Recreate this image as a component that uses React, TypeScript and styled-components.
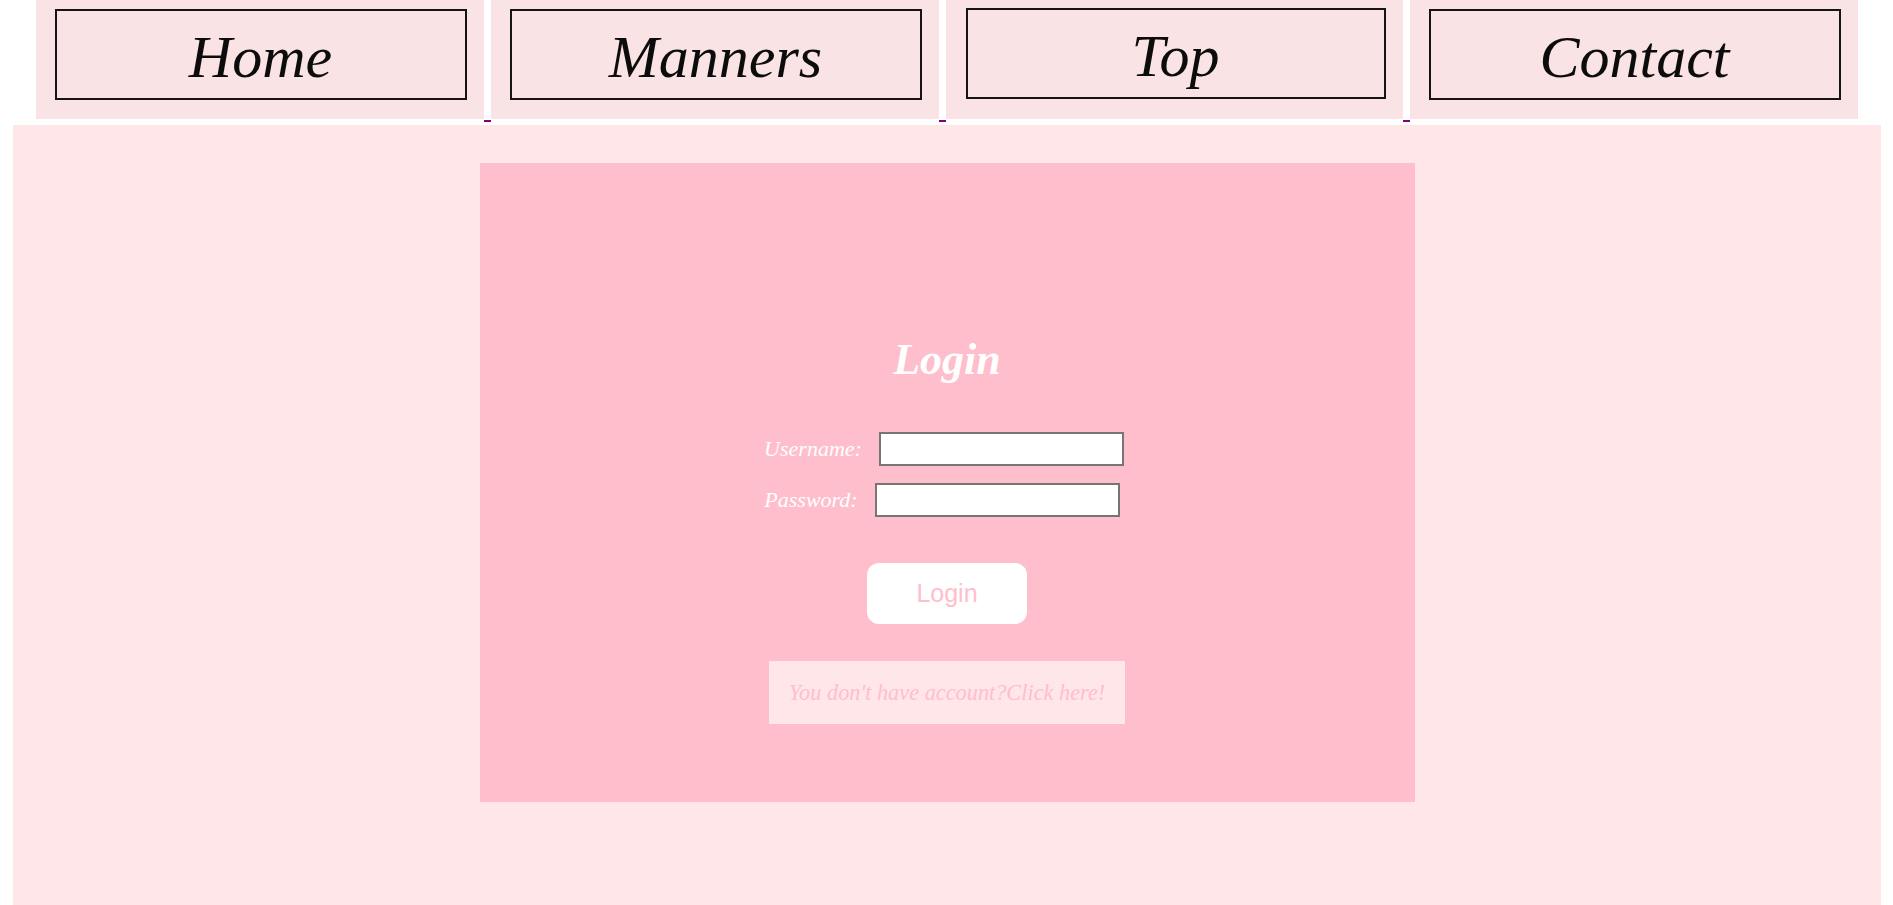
import { Fragment } from 'react';
import styled, { createGlobalStyle } from 'styled-components';

const GlobalStyle = createGlobalStyle`
  html, body {
    margin: 0;
    padding: 0;
    background: #ffffff;
    overflow: hidden;
  }
  body {
    font-family: 'Liberation Serif', 'Times New Roman', serif;
  }
`;

const Nav = styled.nav`
  display: flex;
  justify-content: center;
  align-items: flex-start;
  height: 122px;
`;

const NavLink = styled.a<{ $wide?: boolean }>`
  display: block;
  width: ${(p) => (p.$wide ? '457px' : '448px')};
  height: 119px;
  box-sizing: border-box;
  padding: ${(p) => (p.$wide ? '8px 17px 0 20px' : '9px 17px 0 19px')};
  background: #f9e3e5;
  text-decoration: none;
`;

const NavBox = styled.div`
  height: 91px;
  box-sizing: border-box;
  border: 2px solid #141414;
  display: flex;
  align-items: center;
  justify-content: center;
  font-style: italic;
  font-size: 60px;
  color: #0c0c0c;
  padding-top: 6px;
`;

const LinkGap = styled.span`
  width: 7px;
  height: 122px;
  box-sizing: border-box;
  border-bottom: 2px solid #800080;
`;

const Main = styled.main`
  margin: 3px 12px 0 13px;
  min-height: 780px;
  box-sizing: border-box;
  padding-top: 38px;
  background: #ffe6e9;
`;

const Card = styled.section`
  width: 935px;
  height: 639px;
  margin: 0 auto;
  box-sizing: border-box;
  padding-top: 175px;
  background: #ffbecb;
  display: flex;
  flex-direction: column;
  align-items: center;
`;

const Title = styled.h1`
  margin: 0 0 50px;
  font-size: 44px;
  line-height: 1;
  font-style: italic;
  font-weight: bold;
  color: #ffffff;
`;

const Field = styled.label<{ $last?: boolean }>`
  display: flex;
  align-items: center;
  gap: 17px;
  margin-bottom: ${(p) => (p.$last ? '46px' : '17px')};
  margin-right: ${(p) => (p.$last ? '10px' : '6px')};
  font-size: 22px;
  font-style: italic;
  color: #ffffff;
`;

const Input = styled.input`
  width: 245px;
  height: 34px;
  box-sizing: border-box;
  border: 2px solid #767676;
  background: #ffffff;
  padding: 0 4px;
  outline: none;
`;

const SubmitButton = styled.button`
  width: 160px;
  height: 61px;
  border: none;
  border-radius: 12px;
  background: #ffffff;
  color: #ffbecb;
  font-family: 'Liberation Sans', Arial, sans-serif;
  font-size: 25px;
  margin-bottom: 37px;
  cursor: pointer;
`;

const SignupLink = styled.a`
  width: 356px;
  height: 63px;
  box-sizing: border-box;
  display: flex;
  align-items: center;
  justify-content: center;
  background: #ffe6e9;
  color: #ffbecb;
  font-style: italic;
  font-size: 22.3px;
  text-decoration: none;
`;

const links = [
  { label: 'Home', wide: false },
  { label: 'Manners', wide: false },
  { label: 'Top', wide: true },
  { label: 'Contact', wide: false },
];

export default function App() {
  return (
    <>
      <GlobalStyle />
      <Nav>
        {links.map((l, i) => (
          <Fragment key={l.label}>
            {i > 0 && <LinkGap />}
            <NavLink href="#" $wide={l.wide}>
              <NavBox>{l.label}</NavBox>
            </NavLink>
          </Fragment>
        ))}
      </Nav>
      <Main>
        <Card>
          <Title>Login</Title>
          <Field>
            Username:
            <Input type="text" />
          </Field>
          <Field $last>
            Password:
            <Input type="password" />
          </Field>
          <SubmitButton type="button">Login</SubmitButton>
          <SignupLink href="#">You don't have account?Click here!</SignupLink>
        </Card>
      </Main>
    </>
  );
}
